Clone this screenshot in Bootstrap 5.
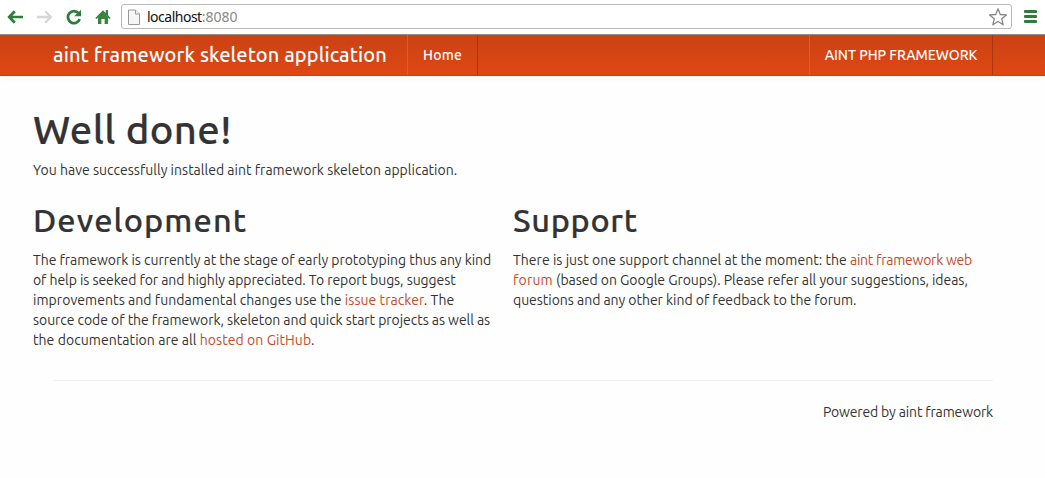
<!DOCTYPE html>
<html lang="en">
<head>
<meta charset="utf-8">
<title>aint framework skeleton application</title>
<link rel="stylesheet" href="https://cdn.jsdelivr.net/npm/bootstrap@5.3.0/dist/css/bootstrap.min.css">
<style>
body{font:14px/20px Ubuntu,"Noto Sans",sans-serif;color:#333;background:#fefefe;overflow:hidden}
.browser-bar{height:35px;background:#fff;border-bottom:1px solid #9c8f86}
.tool-row{height:33px;margin-left:-1px}
.tool-icon{width:16px;height:16px;flex:none}
.address{height:25px;width:891px;margin-left:10px;border:1px solid #b9b9b9;border-radius:3px;font-family:"Noto Sans",sans-serif;line-height:23px;color:#111;letter-spacing:-.5px}
.address .port{color:#888;letter-spacing:0}
.site-nav{height:41px;background:linear-gradient(#cb4213,#dd4814);border-bottom:1px solid #c9400f;padding:0 52px 0 53px;box-shadow:0 1px 8px rgba(0,0,0,.04)}
.site-nav a{color:#fff;text-decoration:none}
.site-name{font-size:20px;font-weight:500;letter-spacing:.11px;width:354px;line-height:39px}
.nav-item-box{border-left:1px solid #d95f33;border-right:1px solid #a63711;height:40px;line-height:40px;font-weight:500;text-align:center}
.nav-home{width:71px;letter-spacing:.2px}
.nav-docs{width:184px;letter-spacing:-.05px}
.page{padding:34px 52px 0 33px}
h1,h2{color:#333;font-weight:500;-webkit-text-stroke:.2px #333}
h1{font-size:40px;line-height:40px;letter-spacing:.4px;margin-bottom:10px}
h2{font-size:32.5px;line-height:40px;margin:0 0 10px}
.page a{color:#c74a2b;text-decoration:none}
.text-line{display:block;white-space:nowrap}
.col-text{width:480px}
.foot{margin:30px 0 0 20px;border-top:1px solid #f2f2f2;padding-top:21px;letter-spacing:-.15px}
</style>
</head>
<body>
<header class="browser-bar">
  <div class="tool-row d-flex align-items-center">
    <svg class="tool-icon" style="margin-left:8px" viewBox="0 0 16 16" fill="none" stroke="#2d7d39" stroke-width="2.7"><path d="M7.8 2.2 2.2 8l5.6 5.8M2.5 8H16"/></svg>
    <svg class="tool-icon" style="margin-left:14px" viewBox="0 0 16 16" fill="none" stroke="#d6d8d6" stroke-width="2.3"><path d="m8.2 2.2 5.6 5.8-5.6 5.8M13.5 8H0"/></svg>
    <svg class="tool-icon" style="margin-left:13px" viewBox="0 0 16 16"><path d="M12.5 4.2A6 6 0 1 0 13.7 10" fill="none" stroke="#2d7d39" stroke-width="2.7"/><path d="M15 .8v6.5H8.3z" fill="#2d7d39"/></svg>
    <svg class="tool-icon" style="margin-left:13px" viewBox="0 0 16 16" fill="#388443"><path d="M8 1.2 10.8 4V1H13v5.2l2.7 2.7-1.2 1.2-1.5-1.3V15H9.6v-5H6.4v5H3V8.8l-1.5 1.3L.3 8.9z"/></svg>
    <div class="address d-flex align-items-center">
      <svg width="12" height="16" style="margin:0 7px 0 6px" viewBox="0 0 12 16" fill="#f5f5f5" stroke="#999"><path d="M.5 1h7l4 4v10.5H.5z"/><path d="M7.5 1v4h4"/></svg>
      <span>localhost<span class="port">:8080</span></span>
      <svg class="ms-auto" width="20" height="20" style="margin-right:3px" viewBox="0 0 20 20" fill="#fff" stroke="#858585" stroke-width="1.3" stroke-linejoin="round"><path d="m10 1.8 2.3 5.7 6.1.4-4.7 3.9 1.5 6L10 14.5l-5.2 3.3 1.5-6L1.6 7.9l6.1-.4z"/></svg>
    </div>
    <svg width="13" height="15" style="margin-left:12px" viewBox="0 0 13 15" fill="#2f7d3a"><rect y="1" width="13" height="3" rx="1"/><rect y="6" width="13" height="3" rx="1"/><rect y="11" width="13" height="3" rx="1"/></svg>
  </div>
</header>
<nav class="site-nav d-flex">
  <a class="site-name" href="#">aint framework skeleton application</a>
  <a class="nav-item-box nav-home" href="#">Home</a>
  <a class="nav-item-box nav-docs ms-auto" href="#">AINT PHP FRAMEWORK</a>
</nav>
<main class="page">
  <h1>Well done!</h1>
  <p class="mb-0" style="letter-spacing:.015px">You have successfully installed aint framework skeleton application.</p>
  <div class="d-flex" style="margin-top:20px">
    <section class="col-text">
      <h2 style="letter-spacing:1.1px">Development</h2>
      <p class="mb-0">
        <span class="text-line" style="letter-spacing:-.04px">The framework is currently at the stage of early prototyping thus any kind</span>
        <span class="text-line" style="letter-spacing:-.07px">of help is seeked for and highly appreciated. To report bugs, suggest</span>
        <span class="text-line" style="letter-spacing:.06px">improvements and fundamental changes use the <a href="#">issue tracker</a>. The</span>
        <span class="text-line" style="letter-spacing:-.055px">source code of the framework, skeleton and quick start projects as well as</span>
        <span class="text-line" style="letter-spacing:.06px">the documentation are all <a href="#">hosted on GitHub</a>.</span>
      </p>
    </section>
    <section class="col-text">
      <h2 style="letter-spacing:.65px">Support</h2>
      <p class="mb-0">
        <span class="text-line" style="letter-spacing:.025px">There is just one support channel at the moment: the <a href="#" style="letter-spacing:-.24px">aint framework web</a></span>
        <span class="text-line" style="letter-spacing:-.035px"><a href="#" style="letter-spacing:.2px">forum</a> (based on Google Groups). Please refer all your suggestions, ideas,</span>
        <span class="text-line" style="letter-spacing:-.035px">questions and any other kind of feedback to the forum.</span>
      </p>
    </section>
  </div>
  <footer class="foot text-end">Powered by aint framework</footer>
</main>
<script src="https://cdn.jsdelivr.net/npm/bootstrap@5.3.0/dist/js/bootstrap.bundle.min.js"></script>
</body>
</html>
